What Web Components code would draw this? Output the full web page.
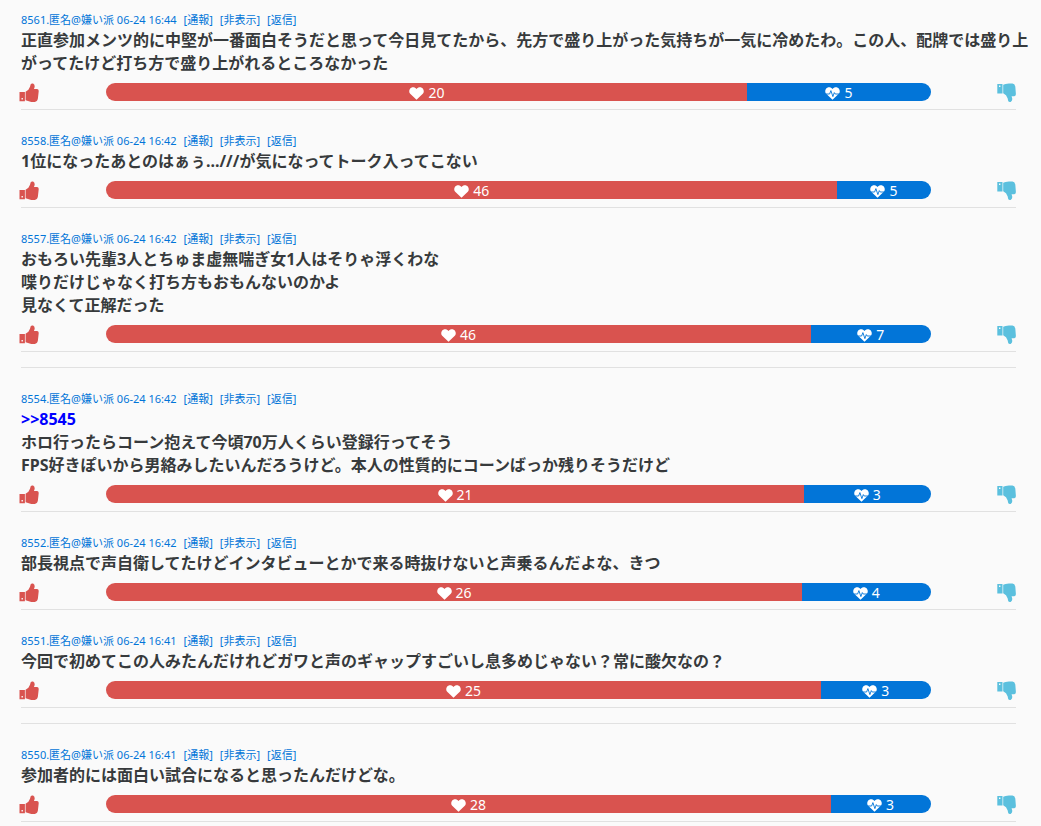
<!DOCTYPE html>
<html lang="ja">
<head>
<meta charset="utf-8">
<title>コメント一覧</title>
<style>
  body {
    margin: 0;
    background: #fafafa;
    color: #373a3c;
    font-family: "Noto Sans", "Noto Sans CJK JP", sans-serif;
  }
  .reply { color: #0000ff; text-decoration: none; }
</style>
</head>
<body>
<post-feed>
  <forum-post no="8561" time="06-24 16:44" likes="20" dislikes="5">正直参加メンツ的に中堅が一番面白そうだと思って今日見てたから、先方で盛り上がった気持ちが一気に冷めたわ。この人、配牌では盛り上がってたけど打ち方で盛り上がれるところなかった</forum-post>
  <forum-post no="8558" time="06-24 16:42" likes="46" dislikes="5">1位になったあとのはぁぅ...///が気になってトーク入ってこない</forum-post>
  <forum-post no="8557" time="06-24 16:42" likes="46" dislikes="7">おもろい先輩3人とちゅま虚無喘ぎ女1人はそりゃ浮くわな<br>喋りだけじゃなく打ち方もおもんないのかよ<br>見なくて正解だった</forum-post>
  <feed-rule></feed-rule>
  <forum-post no="8554" time="06-24 16:42" likes="21" dislikes="3"><a class="reply" href="#8545">&gt;&gt;8545</a><br>ホロ行ったらコーン抱えて今頃70万人くらい登録行ってそう<br>FPS好きぽいから男絡みしたいんだろうけど。本人の性質的にコーンばっか残りそうだけど</forum-post>
  <forum-post no="8552" time="06-24 16:42" likes="26" dislikes="4">部長視点で声自衛してたけどインタビューとかで来る時抜けないと声乗るんだよな、きつ</forum-post>
  <forum-post no="8551" time="06-24 16:41" likes="25" dislikes="3">今回で初めてこの人みたんだけれどガワと声のギャップすごいし息多めじゃない？常に酸欠なの？</forum-post>
  <feed-rule></feed-rule>
  <forum-post no="8550" time="06-24 16:41" likes="28" dislikes="3">参加者的には面白い試合になると思ったんだけどな。</forum-post>
</post-feed>

<template id="feed-tpl">
  <style>
    :host { display: block; padding: 0 25px 0 21px; }
  </style>
  <slot></slot>
</template>

<template id="rule-tpl">
  <style>
    :host { display: block; margin-top: 15px; border-top: 1px solid #e1e1e1; }
  </style>
</template>

<template id="post-tpl">
  <style>
    :host { display: block; padding: 22px 0 8px; border-bottom: 1px solid #e1e1e1; }
    :host(:first-child) { padding-top: 11px; }
    header { display: flex; gap: 7px; font-size: 11px; line-height: 18px; white-space: nowrap; }
    header a { color: #0275d8; text-decoration: none; }
    .text { margin: 0 -16px 8px 0; font-size: 16px; font-weight: 700; line-height: 23px; }
  </style>
  <header>
    <a class="id"></a>
    <a href="#report">[通報]</a>
    <a href="#hide">[非表示]</a>
    <a href="#reply">[返信]</a>
  </header>
  <div class="text"><slot></slot></div>
  <vote-bar></vote-bar>
</template>

<template id="vote-tpl">
  <style>
    :host { display: grid; grid-template: 18px / 1fr 10fr 1fr; margin: 0 -15px; }
    .cell { padding: 0 15px; display: flex; min-width: 0; }
    .cell:last-child { justify-content: flex-end; }
    button { border: 0; padding: 0; background: none; cursor: pointer; width: 20px; height: 20px; }
    .up { color: #d9534f; margin-left: -2px; }
    .down { color: #5bc0de; }
    button svg { display: block; }
    .down svg { transform: scaleY(-1); }
    .bar { display: flex; flex: 1; overflow: hidden; border-radius: 9px; color: #fff; font-size: 14px; line-height: 18px; }
    .part { display: flex; justify-content: center; align-items: center; gap: 4px; flex-basis: 0; min-width: 0; }
    .like { background: #d9534f; }
    .dislike { background: #0275d8; }
    .part svg { margin-top: 2px; }
    .part span { padding-top: 1px; }
  </style>
  <div class="cell">
    <button class="up" type="button" aria-label="いいね">
      <svg width="20" height="20" viewBox="0 0 20 20" fill="currentColor"><path fill-rule="evenodd" d="M.5 9h5.400v9.300H.5zM2.500 15v1.500h1.400V15z"/><path d="M6.600 8.800 9.400 6.700 11 3.800 11.700 1.200Q12.600.1 14.100.6 15.900 1.600 15.700 3.700L15 6H18.200Q20 6.200 19.700 8.200L18.900 15.500Q18.200 18.700 15.800 18.900H12.300L9 18 6.600 17.300z"/></svg>
    </button>
  </div>
  <div class="cell">
    <div class="bar">
      <div class="part like">
        <svg width="15" height="13" viewBox="0 0 15 13" fill="#fff"><path d="M7.500 12.800 1.200 6.800C-.5 5 .1 1.700 2.300.7 4.200-.1 6.200.4 7.500 2 8.800.4 10.800-.1 12.700.7c2.200 1 2.800 4.300 1.100 6.100z"/></svg>
        <span></span>
      </div>
      <div class="part dislike">
        <svg width="15" height="13" viewBox="0 0 15 13" fill="#fff"><path d="M7.500 12.800 1.200 6.800C-.5 5 .1 1.700 2.300.7 4.200-.1 6.200.4 7.500 2 8.800.4 10.800-.1 12.700.7c2.200 1 2.800 4.300 1.100 6.100z"/><path d="M1 7H4.600L5.900 3.600 7.900 9.600 9.300 5.600 10.200 7H14" fill="none" stroke="#0275d8" stroke-width=".9"/></svg>
        <span></span>
      </div>
    </div>
  </div>
  <div class="cell">
    <button class="down" type="button" aria-label="よくないね">
      <svg width="20" height="20" viewBox="-1 -1 20 20" fill="currentColor"><path fill-rule="evenodd" d="M.3 8.500h5.200v9.500H.3zM2 15v1.500h1.400V15z"/><path d="M6.200 8.800 9 6.700 10.600 3.800 11.300.7Q12.200-.4 13.700.1 15.500 1.100 15.300 3.200L14.600 5.700H17.300Q19 6 18.900 8L18.300 15.500Q17.700 18.300 15.400 18.500H11.900L8.600 18 6.200 17.300z"/></svg>
    </button>
  </div>
</template>

<script>
  class TemplateElement extends HTMLElement {
    constructor() {
      super();
      const tpl = document.getElementById(this.constructor.template);
      this.attachShadow({ mode: 'open' }).append(document.importNode(tpl.content, true));
    }
  }

  class PostFeed extends TemplateElement { static template = 'feed-tpl'; }
  class FeedRule extends TemplateElement { static template = 'rule-tpl'; }

  class VoteBar extends TemplateElement {
    static template = 'vote-tpl';
    // Each share counts one extra vote so that a side without votes stays visible.
    setVotes(likes, dislikes) {
      [['.like', likes], ['.dislike', dislikes]].forEach(([selector, count]) => {
        const part = this.shadowRoot.querySelector(selector);
        part.style.flexGrow = count + 1;
        part.querySelector('span').textContent = count;
      });
    }
  }

  class ForumPost extends TemplateElement {
    static template = 'post-tpl';
    connectedCallback() {
      const no = this.getAttribute('no');
      const id = this.shadowRoot.querySelector('.id');
      id.href = '#' + no;
      id.textContent = `${no}.匿名@嫌い派 ${this.getAttribute('time')}`;
      this.shadowRoot.querySelector('vote-bar')
        .setVotes(Number(this.getAttribute('likes')), Number(this.getAttribute('dislikes')));
    }
  }

  customElements.define('vote-bar', VoteBar);
  customElements.define('feed-rule', FeedRule);
  customElements.define('forum-post', ForumPost);
  customElements.define('post-feed', PostFeed);
</script>
</body>
</html>
